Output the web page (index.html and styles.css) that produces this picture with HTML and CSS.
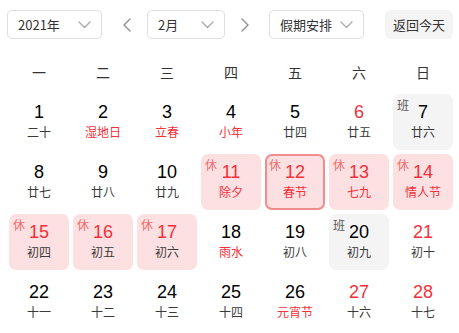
FILE: index.html
```html
<!DOCTYPE html>
<html lang="zh-CN">
<head>
<meta charset="utf-8">
<title>日历</title>
<link rel="stylesheet" href="styles.css">
</head>
<body>
<div class="calendar">
  <div class="toolbar">
    <div class="select select-year"><span>2021年</span><svg class="caret" width="13" height="8" viewBox="0 0 13 8"><polyline points="1,1 6.5,6.5 12,1" /></svg></div>
    <button class="arrow arrow-prev" type="button"><svg width="8" height="14" viewBox="0 0 8 14"><polyline points="7,1 1,7 7,13" /></svg></button>
    <div class="select select-month"><span>2月</span><svg class="caret" width="13" height="8" viewBox="0 0 13 8"><polyline points="1,1 6.5,6.5 12,1" /></svg></div>
    <button class="arrow arrow-next" type="button"><svg width="8" height="14" viewBox="0 0 8 14"><polyline points="1,1 7,7 1,13" /></svg></button>
    <div class="select select-holiday"><span>假期安排</span><svg class="caret" width="13" height="8" viewBox="0 0 13 8"><polyline points="1,1 6.5,6.5 12,1" /></svg></div>
    <button class="today-btn" type="button">返回今天</button>
  </div>

  <div class="weekdays">
    <span>一</span><span>二</span><span>三</span><span>四</span><span>五</span><span>六</span><span>日</span>
  </div>

  <div class="days">
    <div class="day"><span class="num">1</span><span class="lunar">二十</span></div>
    <div class="day"><span class="num">2</span><span class="lunar red">湿地日</span></div>
    <div class="day"><span class="num">3</span><span class="lunar red">立春</span></div>
    <div class="day"><span class="num">4</span><span class="lunar red">小年</span></div>
    <div class="day"><span class="num">5</span><span class="lunar">廿四</span></div>
    <div class="day"><span class="num red">6</span><span class="lunar">廿五</span></div>
    <div class="day work"><span class="tag">班</span><span class="num">7</span><span class="lunar">廿六</span></div>

    <div class="day"><span class="num">8</span><span class="lunar">廿七</span></div>
    <div class="day"><span class="num">9</span><span class="lunar">廿八</span></div>
    <div class="day"><span class="num">10</span><span class="lunar">廿九</span></div>
    <div class="day rest"><span class="tag">休</span><span class="num red">11</span><span class="lunar red">除夕</span></div>
    <div class="day rest today"><span class="tag">休</span><span class="num red">12</span><span class="lunar red">春节</span></div>
    <div class="day rest"><span class="tag">休</span><span class="num red">13</span><span class="lunar red">七九</span></div>
    <div class="day rest"><span class="tag">休</span><span class="num red">14</span><span class="lunar red">情人节</span></div>

    <div class="day rest"><span class="tag">休</span><span class="num red">15</span><span class="lunar">初四</span></div>
    <div class="day rest"><span class="tag">休</span><span class="num red">16</span><span class="lunar">初五</span></div>
    <div class="day rest"><span class="tag">休</span><span class="num red">17</span><span class="lunar">初六</span></div>
    <div class="day"><span class="num">18</span><span class="lunar red">雨水</span></div>
    <div class="day"><span class="num">19</span><span class="lunar">初八</span></div>
    <div class="day work"><span class="tag">班</span><span class="num">20</span><span class="lunar">初九</span></div>
    <div class="day"><span class="num red">21</span><span class="lunar">初十</span></div>

    <div class="day"><span class="num">22</span><span class="lunar">十一</span></div>
    <div class="day"><span class="num">23</span><span class="lunar">十二</span></div>
    <div class="day"><span class="num">24</span><span class="lunar">十三</span></div>
    <div class="day"><span class="num">25</span><span class="lunar">十四</span></div>
    <div class="day"><span class="num">26</span><span class="lunar red">元宵节</span></div>
    <div class="day"><span class="num red">27</span><span class="lunar">十六</span></div>
    <div class="day"><span class="num red">28</span><span class="lunar">十七</span></div>
  </div>
</div>
</body>
</html>
```
FILE: styles.css
```css
* { box-sizing: border-box; }

html, body {
  margin: 0;
  padding: 0;
  background: #fff;
}

body {
  font-family: "Noto Sans CJK SC", "Noto Sans", sans-serif;
  color: #333;
  overflow: hidden;
}

.calendar {
  width: 459px;
}

.toolbar {
  display: flex;
  align-items: center;
  padding: 10px 6px 0 7px;
  height: 39px;
}

.select {
  height: 29px;
  border: 1px solid #dcdfe6;
  border-radius: 5px;
  background: #fff;
  display: flex;
  align-items: center;
  justify-content: space-between;
  padding: 0 10px 0 10px;
  font-size: 13px;
  color: #333;
}

.select span {
  line-height: 27px;
}

.caret polyline {
  fill: none;
  stroke: #a8abb2;
  stroke-width: 1.4;
  stroke-linecap: round;
  stroke-linejoin: round;
}

.select-year { width: 95px; }
.select-month { width: 78px; }
.select-holiday { width: 95px; margin-left: 15px; }

.arrow {
  width: 18px;
  height: 29px;
  border: 0;
  background: transparent;
  padding: 0;
  display: flex;
  align-items: center;
  justify-content: center;
}

.arrow polyline {
  fill: none;
  stroke: #8c8f96;
  stroke-width: 1.4;
  stroke-linecap: round;
  stroke-linejoin: round;
}

.arrow-prev { margin: 0 11px 0 16px; }
.arrow-next { margin-left: 11px; }

.today-btn {
  margin-left: auto;
  width: 68px;
  height: 29px;
  border: 0;
  border-radius: 6px;
  background: #f4f4f5;
  font-family: "Noto Sans CJK SC", sans-serif;
  font-size: 13px;
  color: #333;
  padding: 0;
}

.weekdays {
  display: grid;
  grid-template-columns: repeat(7, 64px);
  margin: 13px 0 0 7px;
  height: 40px;
  align-items: center;
  font-size: 14px;
  color: #333;
  text-align: center;
}

.days {
  display: grid;
  grid-template-columns: repeat(7, 64px);
  grid-auto-rows: 60px;
  margin-left: 7px;
}

.day {
  position: relative;
  margin: 2px;
  border-radius: 7px;
  display: flex;
  flex-direction: column;
  align-items: center;
  padding-top: 7px;
}

.day.rest {
  background: #fde0e1;
}

.day.work {
  background: #f4f4f5;
}

.day.today {
  box-shadow: inset 0 0 0 2px #f08c8c;
}

.num {
  font-family: "Liberation Sans", Arial, sans-serif;
  font-size: 18px;
  line-height: 22px;
  color: #000;
}

.lunar {
  font-size: 12px;
  line-height: 16px;
  margin-top: 1px;
  color: #3a3a3a;
}

.red,
.lunar.red {
  color: #f5303a;
}

.tag {
  position: absolute;
  top: 3px;
  left: 4px;
  font-size: 12px;
  line-height: 16px;
  color: #555;
}

.rest .tag {
  color: #f26b6b;
}
```
